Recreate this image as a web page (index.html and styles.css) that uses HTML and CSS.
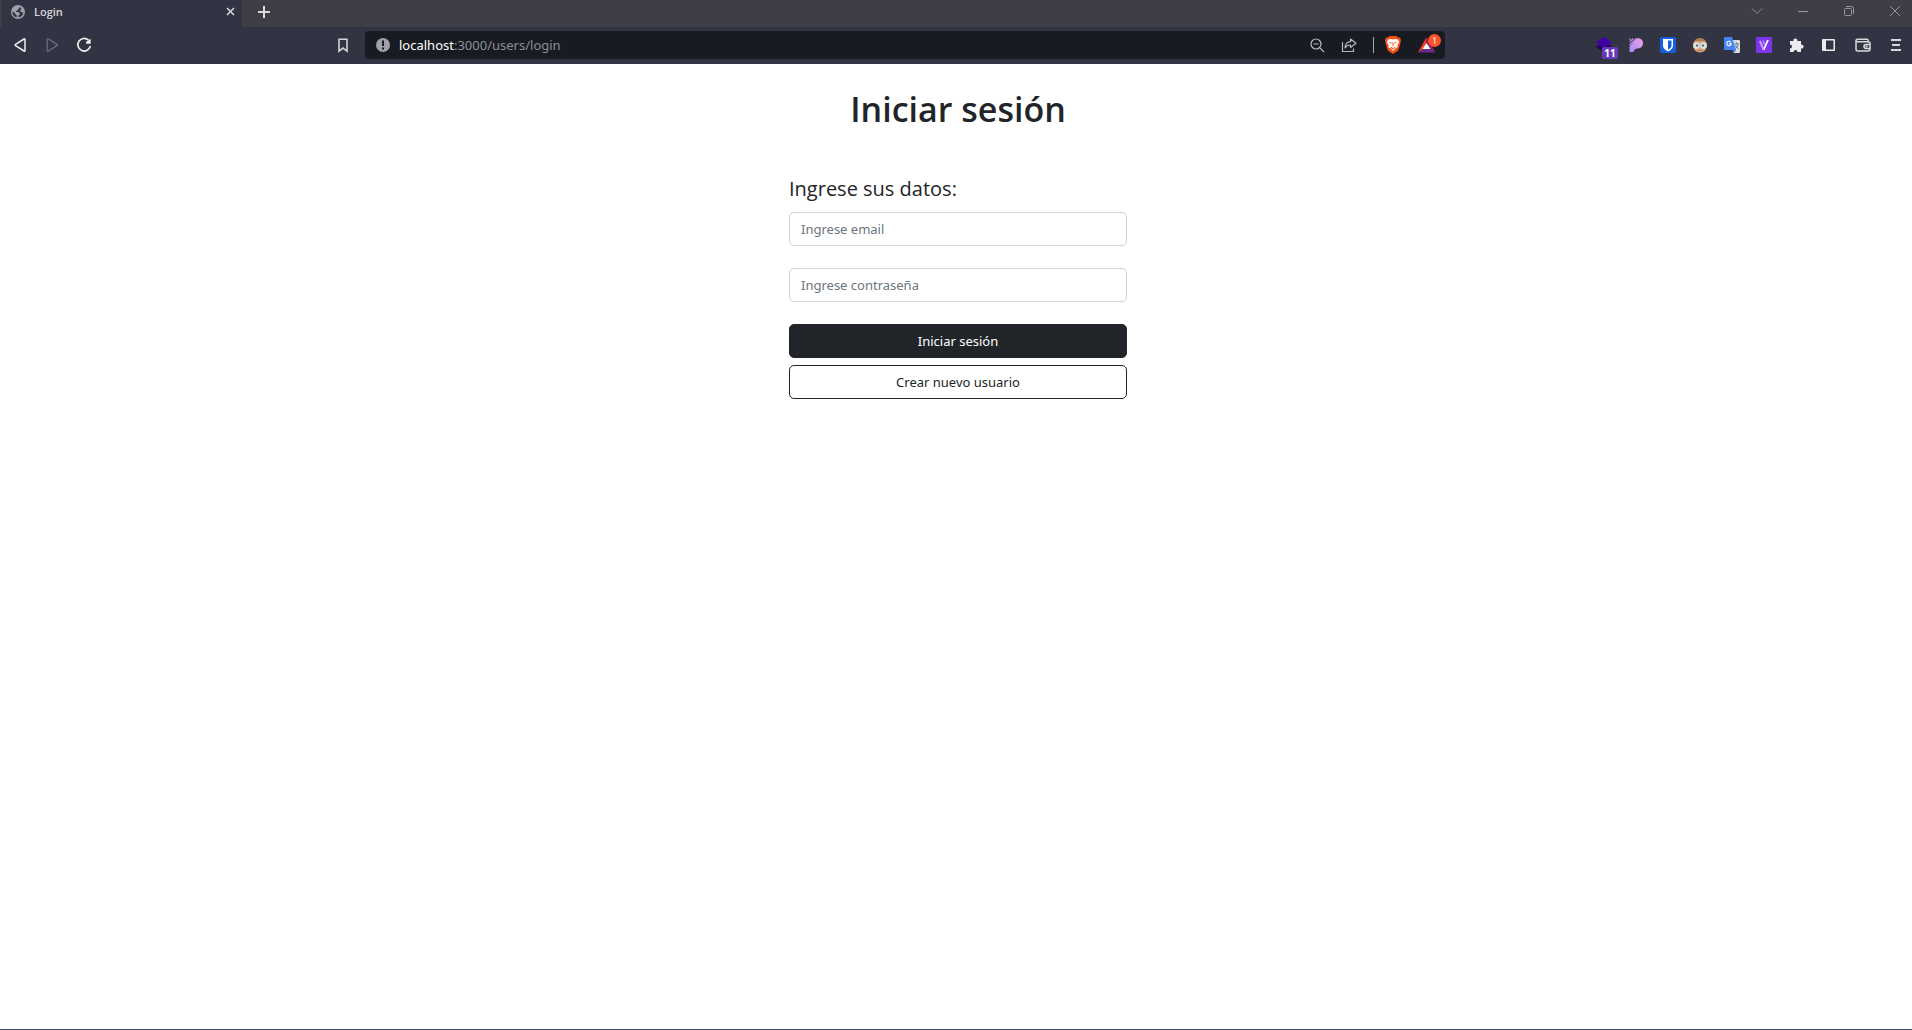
FILE: index.html
```html
<!DOCTYPE html>
<html lang="es">
<head>
<meta charset="utf-8">
<title>Login</title>
<link rel="stylesheet" href="styles.css">
</head>
<body>
<header class="browser">
  <div class="tabstrip">
    <div class="tab">
      <svg class="favicon" width="14" height="14" viewBox="0 0 14 14"><circle cx="7" cy="7" r="7" fill="#9ea1a8"/><path d="M7.500 1.300C9 1.600 9.200 2.200 8.600 3.200L7 4l-.3 1.600-2 .3.5 1.200 3 .2.800 1.600-1.400 1.300-.3 2c3 .3 4.800-1.900 5-4.700l-2-.2-1.200-1.800 1.400-1.700C9.800 2.400 8.600 1.500 7.500 1.300zM1.300 6.500l2.400 1.200.9 1.800 1.200.8v2C3.200 12 1.200 9.600 1.300 6.500z" fill="#323443"/></svg>
      <span class="tab-title">Login</span>
      <button class="icon" aria-label="Cerrar pestaña"><svg width="9" height="9" viewBox="0 0 9 9"><path d="M1 1l7 7M8 1L1 8" stroke="#d4d4da" stroke-width="1.600"/></svg></button>
    </div>
    <button class="icon new-tab" aria-label="Nueva pestaña"><svg width="12" height="12" viewBox="0 0 12 12"><path d="M6 0v12M0 6h12" stroke="#d9d9dc" stroke-width="2"/></svg></button>
    <div class="window-controls">
      <button class="icon" aria-label="Buscar pestañas"><svg width="12" height="12" viewBox="0 0 12 12"><path d="M1 3.500l5 5 5-5" fill="none" stroke="#8b8a91"/></svg></button>
      <button class="icon" aria-label="Minimizar"><svg width="12" height="12" viewBox="0 0 12 12"><path d="M1 6.500h10" stroke="#9a99a0"/></svg></button>
      <button class="icon" aria-label="Restaurar"><svg width="12" height="12" viewBox="0 0 12 12"><g fill="none" stroke="#97969d"><rect x="1.500" y="3.500" width="7" height="7" rx="1"/><path d="M3 1.500h5.500a2 2 0 0 1 2 2V9"/></g></svg></button>
      <button class="icon" aria-label="Cerrar"><svg width="12" height="12" viewBox="0 0 12 12"><path d="M1 1l10 10M11 1L1 11" stroke="#96959c"/></svg></button>
    </div>
  </div>
  <div class="toolbar">
    <nav class="navigation">
      <button class="icon" aria-label="Atrás"><svg width="16" height="16" viewBox="0 0 16 16"><path d="M12 2L3.600 7.400q-.8.6 0 1.200L12 14q1 .5 1-.8V2.800Q13 1.500 12 2z" fill="none" stroke="#eee" stroke-width="1.500"/></svg></button>
      <button class="icon" aria-label="Adelante"><svg width="16" height="16" viewBox="0 0 16 16"><path d="M4.500 2l8.400 5.400q.8.6 0 1.200L4.500 14q-1.300.5-1.300-.8V2.800Q3.200 1.500 4.500 2z" fill="none" stroke="#6c6d79" stroke-width="1.300"/></svg></button>
      <button class="icon" aria-label="Recargar"><svg width="16" height="16" viewBox="0 0 16 16"><path d="M12.500 3.200A6.300 6.300 0 1 0 14.300 9" fill="none" stroke="#eee" stroke-width="1.700"/><path d="M14.700 1.800v5h-4.500q-.8-1 .2-2z" fill="#eee"/></svg></button>
      <button class="icon bookmark" aria-label="Marcador"><svg width="16" height="16" viewBox="0 0 16 16"><path d="M4 2.200h8v11.900l-4-3-4 3z" fill="none" stroke="#d4d4d8" stroke-width="1.600"/></svg></button>
    </nav>
    <div class="address">
      <svg width="14" height="14" viewBox="0 0 14 14"><circle cx="7" cy="7" r="7" fill="#9ea1a8"/><path d="M6 2.500h2v5.500H6zM6 9.500h2v2H6z" fill="#191b22"/></svg>
      <span class="url"><span class="host">localhost</span>:3000/users/login</span>
      <button class="icon" aria-label="Zoom"><svg width="16" height="16" viewBox="0 0 16 16"><g fill="none" stroke="#bbbcc0" stroke-width="1.200"><circle cx="7" cy="7" r="5"/><path d="M4.500 7h5M10.600 10.600L15 15"/></g></svg></button>
      <button class="icon" aria-label="Compartir"><svg width="16" height="16" viewBox="0 0 16 16"><path d="M1.500 5v9.500h11v-3M9.500 2l5.500 4.200-5.500 4.300V8Q6 7.800 4 11 4.300 5 9.500 4.700z" fill="none" stroke="#b6b7bb" stroke-width="1.200" stroke-linejoin="round"/></svg></button>
      <span class="divider"></span>
      <button class="icon" aria-label="Brave Shields"><svg width="16" height="18" viewBox="0 0 16 18"><path d="M4.500 0h7l1.500 1.600 2-.1 1 3-.6 1.500.1 1-2.300 7.500L8 18l-5.200-3.500L.5 7l.1-1L0 4.500l1-3 2 .1z" fill="#fb4f16"/><path d="M3.500 3.200l2.500-.3 2 .6 2-.6 2.500.3 1.800 2.800-2 3.200.3 2-2.300 1.300L8 15l-2.300-2.500-2.300-1.300.3-2-2-3.200z" fill="#fff"/><path d="M4 6.200l2.500.4.2 1-1.400-.1zM12 6.200l-2.500.4-.2 1 1.400-.1zM7.600 6h.8l.2 3.500L8 10.500l-.6-1zM5 10.500l1.800.8L8 12.300l1.200-1 1.800-.8-1 1.600-2 1.300-2-1.300z" fill="#fb4f16"/></svg></button>
      <button class="icon rewards" aria-label="Brave Rewards"><svg width="20" height="18" viewBox="0 0 20 18"><path d="M9.500 1L1 16.500l5.500-3.500 3-6z" fill="#f83b25"/><path d="M9.500 1l9 15.500-5-3.500-4-6z" fill="#9e1f63"/><path d="M1 16.500h17.500l-5-3.500h-7z" fill="#662d91"/><path d="M9.500 7l4 6h-8z" fill="#fff"/></svg><span class="count">1</span></button>
    </div>
    <div class="extensions">
      <button class="icon stack" aria-label="Extensión"><svg width="16" height="16" viewBox="0 0 16 16"><path d="M0 10l3-2.500L8 10l5-2.500 3 2.500-8 5z" fill="#270064"/><path d="M8 0l8 5.500L8 11 0 5.500z" fill="#4100a5"/></svg><span class="tag">11</span></button>
      <button class="icon" aria-label="Pesticide"><svg width="16" height="16" viewBox="0 0 16 16"><defs><linearGradient id="pink" x1="1" y1="0" x2="0" y2="1"><stop offset="0" stop-color="#f2a0e4"/><stop offset="1" stop-color="#a78bfa"/></linearGradient></defs><path d="M9 1q6 .3 6 5.300T9.500 11.500Q6 11.500 5.500 15H1.500V9.500z" fill="url(#pink)"/><path d="M1.500 2.500l1-1M1.500 5.200l3.700-3.700M1.500 8L8 1.500" stroke="#c18bf2" stroke-width="1.100"/></svg></button>
      <button class="icon" aria-label="Bitwarden"><svg width="16" height="16" viewBox="0 0 16 16"><rect width="16" height="16" rx="2" fill="#175ddc"/><path d="M3 2h10v6.500Q13 12 8 14.500 3 12 3 8.500z" fill="#fff"/><path d="M8 3.500h3.500v5Q11.500 11 8 12.800z" fill="#175ddc"/></svg></button>
      <button class="icon" aria-label="Perfil"><svg width="16" height="16" viewBox="0 0 16 16"><circle cx="8" cy="8.500" r="7" fill="#dca27d"/><path d="M1.500 6Q3 1 8 1t6.500 5Q10 3 8 4.200 5 3 1.500 6z" fill="#a87c50"/><circle cx="4.500" cy="8.500" r="3.200" fill="#dce9e8"/><circle cx="11.500" cy="8.500" r="3.200" fill="#dce9e8"/><circle cx="5" cy="8.500" r="1.300" fill="#507a80"/><circle cx="11" cy="8.500" r="1.300" fill="#507a80"/><path d="M6 13.500h4" stroke="#b86d51"/></svg></button>
      <button class="icon" aria-label="Traductor"><svg width="16" height="16" viewBox="0 0 16 16"><path d="M6 3h9q1 0 1 1v11q0 1-1 1H9.500z" fill="#dadce0"/><path d="M1 0h7l4 13H1q-1 0-1-1V1q0-1 1-1z" fill="#4385f4"/><path d="M9.500 16l2.500-3H8.500z" fill="#3367d6"/><path d="M6.800 5.200A2.200 2.200 0 1 0 7.200 6.800H5" fill="none" stroke="#fff" stroke-width="1.100"/><path d="M10.500 7H15M12.500 5.500V7M14 7.500Q13 10.500 11.500 11.500M11.500 8.500q1 2 3 3.500" fill="none" stroke="#607d8b"/></svg></button>
      <button class="icon" aria-label="Extensión V"><svg width="16" height="16" viewBox="0 0 16 16"><rect width="16" height="16" rx="1" fill="#7c37ed"/><path d="M7.500 13L12 3" stroke="#fff" stroke-width="1.800"/><path d="M4 4l3.500 9" stroke="#c4a5f7" stroke-width="2"/><path d="M7 3.500l1.500 4" stroke="#b48cf5" stroke-width="1.500"/></svg></button>
      <button class="icon" aria-label="Extensiones"><svg width="16" height="16" viewBox="0 0 16 16"><path d="M2 4h3.500a2 2 0 1 1 3.800 0H13v3.700a2 2 0 1 1 0 3.800V15H9.500a2 2 0 0 0-4 0H2v-3.500a2 2 0 0 0 0-4z" fill="#ececee"/></svg></button>
      <button class="icon" aria-label="Panel lateral"><svg width="18" height="16" viewBox="0 0 18 16"><path d="M3 2h11q1 0 1 1v10q0 1-1 1H3q-1 0-1-1V3q0-1 1-1zM6 3.500v9h7.500v-9z" fill="#ececee" fill-rule="evenodd"/></svg></button>
      <button class="icon" aria-label="Cartera"><svg width="18" height="16" viewBox="0 0 18 16"><g fill="none" stroke="#d9d9dc" stroke-width="1.500"><path d="M14 4.500V3q0-.7-.8-.7H3.500Q2 2.300 2 4v8q0 2 2 2h10q2 0 2-2V6.500q0-1.700-2-1.700H3.500Q2 4.800 2 3.800"/><path d="M16 7.500h-4a2 2 0 0 0 0 4h4M11.500 9.500h2"/></g></svg></button>
      <button class="icon" aria-label="Menú"><svg width="18" height="16" viewBox="0 0 18 16"><path d="M3 3h10M4 8h8M3 13h10" stroke="#d9d9dc" stroke-width="2"/></svg></button>
    </div>
  </div>
</header>
<main class="page">
  <h1 class="title">Iniciar sesión</h1>
  <form class="login">
    <h2 class="subtitle">Ingrese sus datos:</h2>
    <input class="field" type="email" aria-label="Email" placeholder="Ingrese email">
    <input class="field" type="password" aria-label="Contraseña" placeholder="Ingrese contraseña">
    <div class="actions">
      <button class="btn btn-dark" type="submit">Iniciar sesión</button>
      <button class="btn btn-outline" type="button">Crear nuevo usuario</button>
    </div>
  </form>
</main>
</body>
</html>
```
FILE: styles.css
```css
* { box-sizing: border-box; }

body {
  display: flex;
  flex-direction: column;
  min-height: 100vh;
  margin: 0;
  border-bottom: 1px solid #40506d;
  background: #fff;
  color: #212529;
  font-family: "Open Sans", "Noto Sans", sans-serif;
}

button, input { font-family: inherit; }

.icon {
  display: flex;
  position: relative;
  flex: none;
  padding: 0;
  border: 0;
  background: none;
}

.tabstrip {
  display: flex;
  align-items: center;
  height: 27px;
  padding: 0 11px 0 2px;
  background: #3f3e47;
}

.tab {
  display: flex;
  align-items: center;
  gap: 9px;
  width: 240px;
  height: 27px;
  padding: 0 7px 4px 9px;
  background: #323443;
  color: #d6d7dc;
  font-size: 11px;
  font-weight: 600;
}

.tab-title { flex: 1; }

.new-tab { margin: 0 0 3px 16px; }

.window-controls {
  display: flex;
  gap: 34px;
  margin: 0 0 5px auto;
}

.toolbar {
  display: grid;
  grid-template-columns: 365px minmax(0, 1080px) 1fr;
  align-items: center;
  height: 37px;
  padding-bottom: 1px;
  background: #323443;
}

.navigation {
  display: flex;
  gap: 16px;
  padding: 0 14px 0 12px;
}

.bookmark { margin-left: auto; }

.address {
  display: flex;
  align-items: center;
  height: 28px;
  gap: 16px;
  padding: 0 8px 0 11px;
  border-radius: 4px;
  background: #191b22;
}

.url {
  flex: 1;
  margin-left: -7px;
  color: #8c8e95;
  font-family: "Noto Sans", sans-serif;
  font-size: 13px;
  line-height: 18px;
}

.host { color: #fff; }

.divider {
  width: 1px;
  height: 16px;
  margin-right: -5px;
  background: #aaabb0;
}

.count {
  position: absolute;
  top: -2px;
  right: -4px;
  width: 13px;
  height: 13px;
  border-radius: 50%;
  background: #fb542b;
  color: #fff;
  font-size: 9px;
  line-height: 13px;
}

.extensions {
  display: flex;
  justify-content: flex-end;
  gap: 16px;
  padding-right: 6px;
}

.tag {
  position: absolute;
  top: 10px;
  left: 6px;
  width: 16px;
  height: 12px;
  border-radius: 2px;
  background: #673ab7;
  color: #fff;
  font-size: 10px;
  font-weight: 700;
  line-height: 12px;
}

.page {
  display: flex;
  flex: 1;
  flex-direction: column;
  align-items: center;
  padding: 23px 0 24px 4px;
}

.title {
  margin: 0 0 44px;
  font-size: 34px;
  font-weight: 600;
  line-height: 44px;
}

.login {
  display: flex;
  flex-direction: column;
  gap: 22px;
  width: 338px;
  max-width: 100%;
}

.subtitle {
  margin: 0 0 -13px;
  font-size: 20px;
  font-weight: 400;
  line-height: 28px;
}

.field {
  width: 100%;
  height: 34px;
  padding: 0 11px;
  border: 1px solid #ced4da;
  border-radius: 5px;
  background: #fff;
  color: #212529;
  font-family: "Noto Sans", sans-serif;
  font-size: 13px;
}

.field::placeholder { color: #6c757d; }

.actions {
  display: flex;
  flex-direction: column;
  gap: 7px;
}

.btn {
  height: 34px;
  padding: 0 11px;
  border: 1px solid #212529;
  border-radius: 5px;
  font-family: "Noto Sans", sans-serif;
  font-size: 13px;
}

.btn-dark {
  background: #212529;
  color: #fff;
}

.btn-outline {
  background: #fff;
  color: #212529;
}
```
